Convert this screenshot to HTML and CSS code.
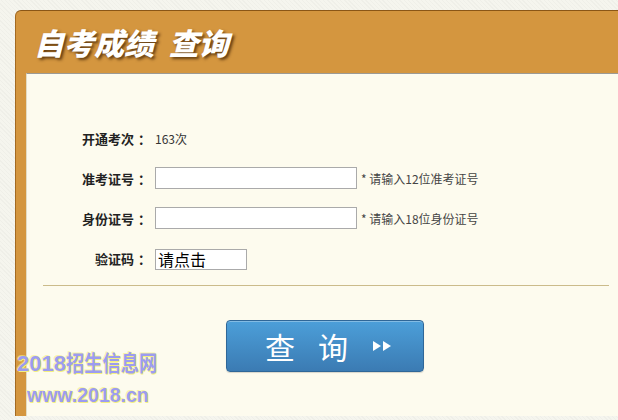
FILE: index.html
```html
<!DOCTYPE html>
<html lang="zh-CN">
<head>
    <meta charset="UTF-8">
    <meta name="viewport" content="width=device-width, initial-scale=1.0">
    <title>自考成绩查询</title>
    <link rel="stylesheet" href="styles.css">
</head>
<body>
    <div class="box">
        <div class="box-head">
            <h1 class="title">自考成绩 查询</h1>
        </div>
        <div class="panel">
            <div class="form">
                <div class="label">开通考次<span class="colon">：</span></div>
                <div class="value"><span class="count">163次</span></div>

                <div class="label">准考证号<span class="colon">：</span></div>
                <div class="value">
                    <input class="field" type="text">
                    <span class="hint">* 请输入12位准考证号</span>
                </div>

                <div class="label">身份证号<span class="colon">：</span></div>
                <div class="value">
                    <input class="field" type="text">
                    <span class="hint">* 请输入18位身份证号</span>
                </div>

                <div class="label">验证码<span class="colon">：</span></div>
                <div class="value">
                    <div class="captcha">请点击</div>
                </div>
            </div>

            <div class="divider"></div>

            <button class="search-btn">
                <span class="btn-char">查</span>
                <span class="btn-char">询</span>
                <svg class="btn-arrows" width="20" height="12" viewBox="0 0 20 12">
                    <polygon points="1,1 9,6 1,11" fill="#fff"/>
                    <polygon points="11,1 19,6 11,11" fill="#fff"/>
                </svg>
            </button>
        </div>
    </div>

    <div class="watermark">
        <div class="wm-name">2018<span class="wm-cjk">招生信息网</span></div>
        <div class="wm-url">www.2018.cn</div>
    </div>
</body>
</html>
```

FILE: styles.css
```css
body {
    margin: 0;
    height: 420px;
    overflow: hidden;
    background-color: #f5f5ee;
    background-image: repeating-linear-gradient(45deg, rgba(0, 0, 0, 0.025) 0 1px, transparent 1px 3px);
    font-family: "Noto Sans CJK SC", "Liberation Sans", sans-serif;
    position: relative;
}

.box {
    margin: 10px 0 0 15px;
    background-color: #d4963f;
    border-top: 1px solid #8a5616;
    border-left: 1px solid #a36a22;
    border-radius: 6px 0 0 0;
    padding-left: 10px;
}

.box-head {
    height: 62px;
    display: flex;
    align-items: center;
    padding-left: 8px;
}

.title {
    margin: 0;
    color: #fff;
    font-size: 30px;
    font-weight: 900;
    font-style: italic;
    word-spacing: 8px;
    text-shadow: 2px 2px 3px rgba(60, 30, 0, 0.75);
}

.panel {
    background-color: #fdfbee;
    border-top: 1px solid #9c9a94;
    border-left: 1px solid #e3dcc4;
    height: 343px;
    padding-top: 44px;
    box-sizing: border-box;
}

.form {
    display: grid;
    grid-template-columns: 126px auto;
    grid-auto-rows: 40px;
    column-gap: 2px;
    align-items: center;
}

.label {
    text-align: right;
    font-size: 13px;
    font-weight: bold;
    color: #222;
}

.colon {
    margin-left: 4px;
    margin-right: 2px;
}

.value {
    display: flex;
    align-items: center;
}

.count {
    font-size: 12px;
    color: #333;
}

.field {
    width: 202px;
    height: 22px;
    box-sizing: border-box;
    border: 1px solid #aaa;
    background: #fff;
    margin: 0;
    padding: 0;
}

.hint {
    margin-left: 4px;
    font-size: 12px;
    color: #444;
}

.captcha {
    width: 92px;
    height: 21px;
    box-sizing: border-box;
    border: 1px solid #aaa;
    background: #fff;
    font-size: 16px;
    line-height: 19px;
    padding-left: 2px;
    color: #000;
    margin-top: 2px;
}

.divider {
    margin: 7px 0 0 16px;
    width: 566px;
    height: 1px;
    background-color: #cbbb8a;
}

.search-btn {
    margin: 34px 0 0 199px;
    width: 198px;
    height: 52px;
    border: 1px solid #2f6798;
    border-radius: 4px;
    background: linear-gradient(#4c9fd9, #3b7bb3);
    box-shadow: inset 0 1px 0 rgba(255, 255, 255, 0.3), 0 1px 1px rgba(0, 0, 0, 0.15);
    display: flex;
    align-items: center;
    padding: 0 0 0 38px;
    font-family: "Noto Sans CJK SC", sans-serif;
    color: #fff;
    cursor: pointer;
}

.btn-char {
    font-size: 30px;
    line-height: 1;
    margin-right: 23px;
}

.btn-arrows {
    margin-left: 1px;
}

.watermark {
    position: absolute;
    left: 17px;
    top: 349px;
    font-family: "Liberation Sans", "Noto Sans CJK SC", sans-serif;
    font-weight: bold;
    color: #9c9cf0;
    text-shadow: 0 0 1px #f4f080, 1px 1px 0 #f4f080, -1px -1px 0 rgba(244, 240, 128, 0.6);
    white-space: nowrap;
}

.wm-name {
    font-size: 22px;
    line-height: 30px;
}

.wm-cjk {
    display: inline-block;
    transform: scaleX(0.83);
    transform-origin: left center;
}

.wm-url {
    margin: 4px 0 0 10px;
    font-size: 19.5px;
    line-height: 24px;
}
```
